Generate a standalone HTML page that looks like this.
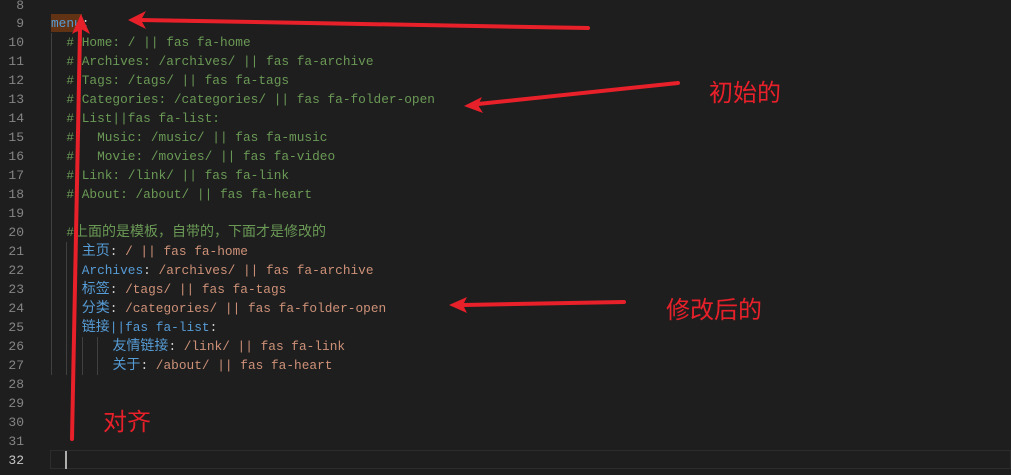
<!DOCTYPE html>
<html><head><meta charset="utf-8"><style>
html,body{margin:0;padding:0;background:#1e1e1e;width:1011px;height:475px;overflow:hidden;position:relative}
.ln{position:absolute;left:0;width:24px;text-align:right;color:#858585;font:13px "Liberation Mono","Noto Sans CJK SC",monospace;line-height:19px}
.c{position:absolute;left:51px;white-space:pre;font:12.8px "Liberation Mono","Noto Sans CJK SC",monospace;line-height:19px;height:19px;color:#d4d4d4}
.z{font-size:14px;font-family:"Noto Sans CJK SC",sans-serif;line-height:0}
.g{color:#6a9955}.k{color:#569cd6}.s{color:#ce9178}
.guide{position:absolute;width:1px;background:#404040}
.lbl{position:absolute;color:#e8202a;font:24px "Noto Sans CJK SC",sans-serif;line-height:28px}
</style></head><body>
<div style="position:absolute;left:50px;top:450px;width:961px;height:19px;border:1px solid #2c2c2c;box-sizing:border-box"></div>
<div style="position:absolute;left:65px;top:451px;width:2px;height:18px;background:#aeafad"></div>
<div style="position:absolute;left:51px;top:14px;width:31px;height:18px;background:#613214"></div>
<div class="guide" style="left:51px;top:33px;height:342px"></div>
<div class="guide" style="left:66px;top:242px;height:133px"></div>
<div class="guide" style="left:82px;top:337px;height:38px"></div>
<div class="guide" style="left:97px;top:337px;height:38px"></div>

<div class="ln" style="top:-4px">8</div>
<div class="ln" style="top:14px">9</div>
<div class="ln" style="top:33px">10</div>
<div class="ln" style="top:52px">11</div>
<div class="ln" style="top:71px">12</div>
<div class="ln" style="top:90px">13</div>
<div class="ln" style="top:109px">14</div>
<div class="ln" style="top:128px">15</div>
<div class="ln" style="top:147px">16</div>
<div class="ln" style="top:166px">17</div>
<div class="ln" style="top:185px">18</div>
<div class="ln" style="top:204px">19</div>
<div class="ln" style="top:223px">20</div>
<div class="ln" style="top:242px">21</div>
<div class="ln" style="top:261px">22</div>
<div class="ln" style="top:280px">23</div>
<div class="ln" style="top:299px">24</div>
<div class="ln" style="top:318px">25</div>
<div class="ln" style="top:337px">26</div>
<div class="ln" style="top:356px">27</div>
<div class="ln" style="top:375px">28</div>
<div class="ln" style="top:394px">29</div>
<div class="ln" style="top:413px">30</div>
<div class="ln" style="top:432px">31</div>
<div class="ln" style="top:451px;color:#c6c6c6">32</div>

<div class="c" style="top:14px"><span class="k">menu</span>:</div>
<div class="c g" style="top:33px">  # Home: / || fas fa-home</div>
<div class="c g" style="top:52px">  # Archives: /archives/ || fas fa-archive</div>
<div class="c g" style="top:71px">  # Tags: /tags/ || fas fa-tags</div>
<div class="c g" style="top:90px">  # Categories: /categories/ || fas fa-folder-open</div>
<div class="c g" style="top:109px">  # List||fas fa-list:</div>
<div class="c g" style="top:128px">  #   Music: /music/ || fas fa-music</div>
<div class="c g" style="top:147px">  #   Movie: /movies/ || fas fa-video</div>
<div class="c g" style="top:166px">  # Link: /link/ || fas fa-link</div>
<div class="c g" style="top:185px">  # About: /about/ || fas fa-heart</div>
<div class="c g" style="top:223px">  #<span class="z">上面的是模板，自带的，下面才是修改的</span></div>
<div class="c" style="top:242px">    <span class="k z">主页</span>: <span class="s">/ || fas fa-home</span></div>
<div class="c" style="top:261px">    <span class="k">Archives</span>: <span class="s">/archives/ || fas fa-archive</span></div>
<div class="c" style="top:280px">    <span class="k z">标签</span>: <span class="s">/tags/ || fas fa-tags</span></div>
<div class="c" style="top:299px">    <span class="k z">分类</span>: <span class="s">/categories/ || fas fa-folder-open</span></div>
<div class="c" style="top:318px">    <span class="k"><span class="z">链接</span>||fas fa-list</span>:</div>
<div class="c" style="top:337px">        <span class="k z">友情链接</span>: <span class="s">/link/ || fas fa-link</span></div>
<div class="c" style="top:356px">        <span class="k z">关于</span>: <span class="s">/about/ || fas fa-heart</span></div>

<svg width="1011" height="475" style="position:absolute;left:0;top:0" fill="#e8202a" stroke="#e8202a">
<g stroke-width="4" stroke-linecap="round" fill="none">
<line x1="588" y1="28" x2="140" y2="20"/>
<line x1="72" y1="439" x2="80" y2="30"/>
<line x1="678" y1="83" x2="478" y2="104"/>
<line x1="624" y1="302" x2="464" y2="305"/>
</g>
<polygon stroke="none" points="128,20 146,11 141,20 146,29"/>
<polygon stroke="none" points="81,14 90,34 81,29 72,34"/>
<polygon stroke="none" points="464,106 482,97 478,105 483,113"/>
<polygon stroke="none" points="449,305 467,297 463,305 467,313"/>
</svg>
<div class="lbl" style="left:709px;top:77px">初始的</div>
<div class="lbl" style="left:666px;top:294px">修改后的</div>
<div class="lbl" style="left:103px;top:406px">对齐</div>
</body></html>
